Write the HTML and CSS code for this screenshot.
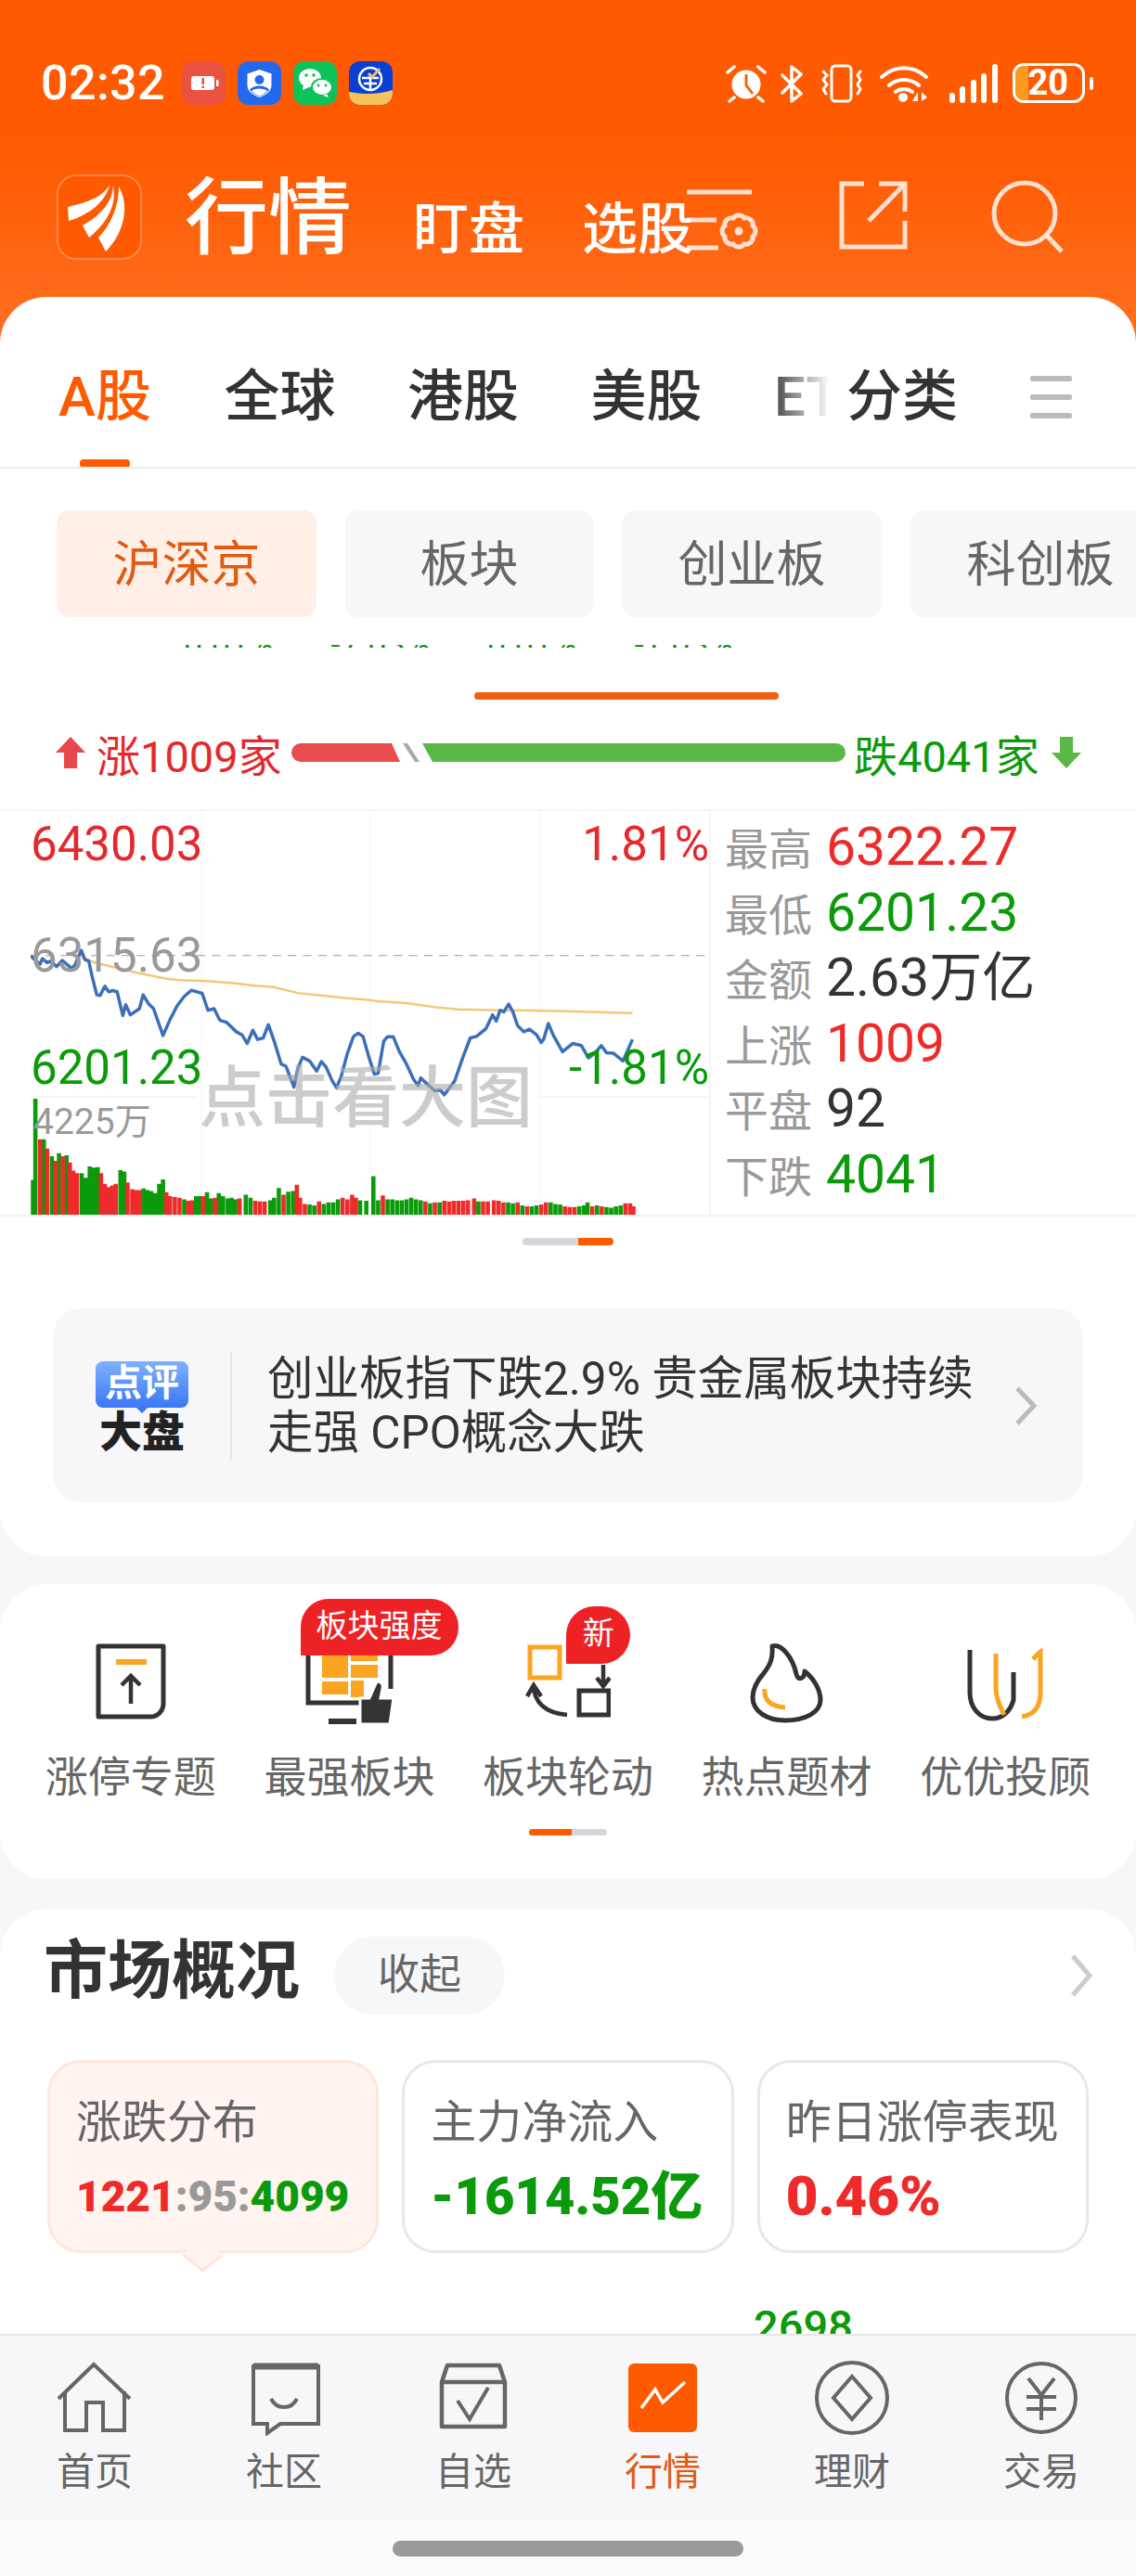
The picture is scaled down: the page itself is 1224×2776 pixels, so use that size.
FILE: index.html
```html
<!DOCTYPE html>
<html lang="zh-CN">
<head>
  <meta charset="utf-8">
  <title>行情</title>
  <link rel="stylesheet" href="styles.css">
</head>
<body>
<div class="app">
  <div class="scroll">
    <header class="header">
      <div class="status">
        <span class="time">02:32</span>
        <svg class="appicon" viewBox="0 0 47 47"><rect width="47" height="47" rx="12" fill="#ea5240"/><rect x="10" y="16" width="25" height="15" rx="3" fill="#fff"/><rect x="37" y="20" width="2.5" height="7" rx="1" fill="#fff"/><rect x="21.5" y="18" width="2.5" height="7" fill="#ea5240"/><rect x="21.5" y="26.500" width="2.500" height="2.500" fill="#ea5240"/></svg>
        <svg class="appicon" viewBox="0 0 47 47"><rect width="47" height="47" rx="12" fill="#2269ee"/><path d="M23.500 9l13 4.500v12c0 7-6 11-13 13.500-7-2.500-13-6.500-13-13.500v-12z" fill="#fff"/><circle cx="23.500" cy="20" r="5" fill="#2269ee"/><path d="M13 31c3-6 18-6 21 0l-4 4-6.500 3-6.500-3z" fill="#2269ee"/><path d="M15 32c3-3.500 14-3.500 17 0-2 2.500-5 4-8.500 5.500-3.500-1.500-6.500-3-8.500-5.500z" fill="#fff"/></svg>
        <svg class="appicon" viewBox="0 0 47 47"><rect width="47" height="47" rx="12" fill="#0ec25a"/><ellipse cx="18" cy="18" rx="12" ry="10" fill="#fff"/><path d="M11 25l-1 6 7-3z" fill="#fff"/><ellipse cx="31" cy="28" rx="11" ry="9" fill="#fff" stroke="#0ec25a" stroke-width="2"/><path d="M36 35l2 4-6-2z" fill="#fff"/><circle cx="14" cy="15" r="1.800" fill="#0ec25a"/><circle cx="22" cy="15" r="1.800" fill="#0ec25a"/><circle cx="27" cy="26" r="1.500" fill="#0ec25a"/><circle cx="35" cy="26" r="1.500" fill="#0ec25a"/></svg>
        <svg class="appicon" viewBox="0 0 47 47"><rect width="47" height="47" rx="12" fill="#0a3fd6"/><path d="M0 33c15 3 32 3 47-2v4a12 12 0 0 1-12 12H12A12 12 0 0 1 0 35z" fill="#f5c35c"/><circle cx="23" cy="19" r="12" fill="none" stroke="#fff" stroke-width="2.500"/><path d="M14 18h18M16 24h14M23 14v16" stroke="#fff" stroke-width="2.500" fill="none"/><path d="M21 13l4 4 8-9" stroke="#e7c06a" stroke-width="3" fill="none"/></svg>
        <div class="status-right">
          <svg class="si-alarm" viewBox="0 0 44 42"><circle cx="22" cy="22" r="15.500" fill="#fff"/><path d="M22 11v12l7 9" stroke="#ff5a00" stroke-width="2.800" fill="none"/><path d="M2 9l7-6M42 9l-7-6M9 36l-5 4M35 36l5 4" stroke="#fff" stroke-width="3.500" stroke-linecap="round"/></svg>
          <svg class="si-bt" viewBox="0 0 26 42"><path d="M2 12l20 20-10 8V3l10 8L2 31" fill="none" stroke="#fff" stroke-width="3.500" stroke-linecap="round" stroke-linejoin="round"/></svg>
          <svg class="si-vib" viewBox="0 0 48 42"><rect x="13" y="2" width="21" height="38" rx="4" fill="none" stroke="#fff" stroke-width="3"/><path d="M4 8l4 4-4 5 4 5-4 5 3 5M44 8l-3 4 3 5-3 5 3 5-3 5" fill="none" stroke="#fff" stroke-width="3" stroke-linecap="round"/></svg>
          <svg class="si-wifi" viewBox="0 0 54 42"><path d="M3 14c14-13 34-13 48 0M11 23c9-8 23-8 32 0M18 30c5-4 13-4 18 0" fill="none" stroke="#fff" stroke-width="4" stroke-linecap="round"/><circle cx="26" cy="36" r="5" fill="#fff"/><path d="M42 30v10h-6zM46 30v10l6-4z" fill="#fff"/></svg>
          <svg class="si-signal" viewBox="0 0 52 42"><path d="M3 34v5M14 27v12M26 20v19M37 13v26M49 3v36" stroke="#fff" stroke-width="6" stroke-linecap="round"/></svg>
          <div class="battery"><i class="battery-fill"></i><b>20</b></div>
          <i class="battery-tip"></i>
        </div>
      </div>
      <div class="titlebar">
        <svg class="logo" viewBox="0 0 92 92"><rect x="1" y="1" width="90" height="90" rx="20" fill="#ff5a00" stroke="#ff9560" stroke-width="1.500"/><path d="M57 11C50 24 34 30 12 35l1 15C34 44 53 30 57 11z" fill="#fff"/><path d="M61 12c4 20-6 40-26 56l-7-13c18-10 32-24 33-43z" fill="#fff"/><path d="M67 13c12 20 6 50-14 70l-8-15c12-12 22-32 22-55z" fill="#fff"/></svg>
        <h1 class="title">行情</h1>
        <span class="subtitle first">盯盘</span>
        <span class="subtitle">选股</span>
        <svg class="tool-filter" viewBox="0 0 92 84"><path d="M2 3h70M2 33h32M2 63h34" stroke="#fff" stroke-opacity=".8" stroke-width="5" fill="none"/><path d="M52 31c3-4 9-4 12 0 5-1 10 3 9 8 4 3 4 9 0 12 1 5-4 9-9 8-3 4-9 4-12 0-5 1-10-3-9-8-4-3-4-9 0-12-1-5 4-9 9-8z" fill="none" stroke="#fff" stroke-opacity=".8" stroke-width="5"/><circle cx="58" cy="45" r="4.500" fill="#fff" fill-opacity=".8"/></svg>
        <svg class="tool-share" viewBox="0 0 74 74"><path d="M27 3H3v68h68V43M43 3h28v30M71 3L32 43" fill="none" stroke="#fff" stroke-opacity=".8" stroke-width="5"/></svg>
        <svg class="tool-search" viewBox="0 0 78 80"><circle cx="36" cy="36" r="33" fill="none" stroke="#fff" stroke-opacity=".8" stroke-width="5"/><path d="M60 60l16 17" stroke="#fff" stroke-opacity=".8" stroke-width="5"/></svg>
      </div>
    </header>

    <section class="sheet">
      <div class="tabs">
        <div class="tabs-list">
          <span class="tab active">A股</span>
          <span class="tab">全球</span>
          <span class="tab">港股</span>
          <span class="tab">美股</span>
          <span class="tab">ETF</span>
        </div>
        <span class="tab tab-type">分类</span>
        <div class="tabs-menu"><i></i><i></i><i></i></div>
      </div>

      <div class="pills">
        <span class="pill active">沪深京</span>
        <span class="pill narrow">板块</span>
        <span class="pill">创业板</span>
        <span class="pill">科创板</span>
      </div>

      <div class="clipped">
        <span>0.01%</span><span>-7.03%</span><span>0.01%</span><span>-1.03%</span>
      </div>
      <div class="swipe-bar"></div>

      <div class="breadth">
        <svg class="arrow" viewBox="0 0 32 34"><path d="M16 0l16 17H23v17H9V17H0z" fill="#e8484b"/></svg>
        <span class="up">涨1009家</span>
        <svg class="breadth-bar" viewBox="0 0 597 20"><path d="M10 0h98l9 20H10a10 10 0 0 1 0-20z" fill="#e84c4e"/><path d="M120 0h5l13 20h-5z" fill="#a8a8a8"/><path d="M141 0h446a10 10 0 0 1 0 20H152z" fill="#5ab946"/></svg>
        <span class="down">跌4041家</span>
        <svg class="arrow" viewBox="0 0 32 34"><path d="M9 0h14v17h9L16 34 0 17h9z" fill="#5ab946"/></svg>
      </div>

      <div class="market">
        <div class="chart">
          <svg class="chart-svg" viewBox="65 92 1435 1313" preserveAspectRatio="none">
            <path d="M427 92V1405M784 92V1405M1142 92V1405" stroke="#f5f5f5" stroke-width="2" fill="none"/>
            <path d="M65 1022H417M1140 1022H1500" stroke="#eee" stroke-width="3" fill="none"/>
            <path d="M65 562H1496" stroke="#999" stroke-width="3" stroke-dasharray="18 14" fill="none"/>
            <path stroke="#0a9a0a" stroke-width="9" fill="none" d="M70 1405V1292M75 1405V1028M93 1405V1160M110 1405V1215M125 1405V1205M141 1405V1212M173 1405V1270M181 1405V1285M190 1405V1248M198 1405V1252M207 1405V1250M255 1405V1260M263 1405V1265M304 1405V1320M312 1405V1325M320 1405V1328M328 1405V1335M337 1405V1305M345 1405V1290M390 1405V1355M415 1405V1345M423 1405V1345M438 1405V1332M447 1405V1352M463 1405V1335M472 1405V1345M482 1405V1352M490 1405V1350M498 1405V1355M520 1405V1340M530 1405V1350M572 1405V1358M580 1405V1350M590 1405V1318M610 1405V1330M620 1405V1328M655 1405V1372M665 1405V1375M685 1405V1370M695 1405V1365M705 1405V1365M715 1405V1355M762 1405V1358M775 1405V1360M790 1405V1280M800 1405V1358M820 1405V1355M830 1405V1355M840 1405V1358M850 1405V1358M860 1405V1355M870 1405V1350M880 1405V1355M890 1405V1358M910 1405V1368M930 1405V1365M1012 1405V1362M1075 1405V1365M1085 1405V1368M1105 1405V1375M1125 1405V1378M1135 1405V1375M1165 1405V1365M1175 1405V1370M1185 1405V1372M1225 1405V1378M1235 1405V1375M1243 1405V1365M1263 1405V1375M1283 1405V1380M1293 1405V1382M1303 1405V1378M1313 1405V1375"/>
            <path stroke="#ee2a2a" stroke-width="9" fill="none" d="M85 1405V1160M100 1405V1190M118 1405V1230M133 1405V1215M148 1405V1235M155 1405V1262M163 1405V1270M214 1405V1270M222 1405V1305M230 1405V1315M238 1405V1310M245 1405V1305M270 1405V1300M280 1405V1322M288 1405V1325M296 1405V1325M352 1405V1332M360 1405V1345M370 1405V1348M380 1405V1350M398 1405V1360M406 1405V1358M430 1405V1345M455 1405V1350M507 1405V1352M540 1405V1360M550 1405V1362M560 1405V1362M600 1405V1340M628 1405V1308M635 1405V1350M645 1405V1370M675 1405V1362M725 1405V1350M735 1405V1355M745 1405V1340M753 1405V1350M810 1405V1342M900 1405V1362M920 1405V1365M940 1405V1360M950 1405V1362M960 1405V1360M970 1405V1360M980 1405V1360M990 1405V1358M1003 1405V1352M1022 1405V1362M1032 1405V1362M1045 1405V1358M1055 1405V1360M1065 1405V1365M1095 1405V1365M1115 1405V1378M1145 1405V1372M1155 1405V1365M1195 1405V1378M1205 1405V1380M1215 1405V1380M1253 1405V1378M1273 1405V1378M1323 1405V1368M1333 1405V1368M1340 1405V1378"/>
            <polyline class="avg-line" points="172,568 200,585 240,600 290,618 350,637 380,642 440,645 500,653 540,660 580,665 630,684 680,692 730,700 780,706 800,711 860,717 920,730 970,737 1050,740 1100,740 1200,743 1338,749"/>
            <polyline class="price-line" points="65,562 75,578 85,590 90,572 100,585 108,580 120,598 132,578 145,595 152,605 160,590 165,570 172,545 180,575 188,580 195,630 205,690 212,692 222,662 230,680 238,676 248,680 260,757 266,722 276,755 295,735 303,690 315,720 325,735 345,822 360,770 375,725 390,695 405,675 428,685 440,740 453,735 465,772 480,780 500,810 512,820 523,848 535,805 545,835 557,830 568,787 580,840 595,915 605,922 622,990 630,930 640,893 655,905 670,938 680,907 690,925 703,970 712,992 722,955 735,880 748,825 758,815 768,825 780,890 792,948 800,945 812,840 820,826 832,826 845,875 860,915 875,965 885,985 890,960 905,982 920,1002 932,1000 940,1015 962,970 980,890 995,830 1008,825 1028,800 1042,755 1050,775 1058,740 1066,745 1076,720 1085,745 1095,790 1108,810 1120,802 1135,820 1145,845 1150,835 1160,783 1170,820 1190,875 1212,848 1230,855 1245,895 1258,880 1272,855 1283,878 1298,880 1318,905 1328,870 1338,835"/>
          </svg>
          <span class="axis hi-price">6430.03</span>
          <span class="axis hi-pct">1.81%</span>
          <span class="axis base-price">6315.63</span>
          <span class="axis lo-price">6201.23</span>
          <span class="axis lo-pct">-1.81%</span>
          <span class="axis vol">4225万</span>
          <span class="watermark">点击看大图</span>
        </div>
        <div class="stats">
          <div class="stat"><label>最高</label><span class="red">6322.27</span></div>
          <div class="stat"><label>最低</label><span class="green">6201.23</span></div>
          <div class="stat"><label>金额</label><span>2.63万亿</span></div>
          <div class="stat"><label>上涨</label><span class="red">1009</span></div>
          <div class="stat"><label>平盘</label><span>92</span></div>
          <div class="stat"><label>下跌</label><span class="green">4041</span></div>
        </div>
      </div>
      <div class="pager chart-pager"><i></i><i class="on"></i></div>

      <div class="comment">
        <div class="comment-logo">
          <span class="bubble">点评</span>
          <span class="big">大盘</span>
        </div>
        <p class="comment-text">创业板指下跌2.9% 贵金属板块持续<br>走强 CPO概念大跌</p>
        <svg class="chevron" viewBox="0 0 24 42"><path d="M3 2l18 19L3 40" fill="none" stroke="#bbb" stroke-width="5"/></svg>
      </div>
    </section>

    <section class="card entries">
      <div class="entry-grid">
        <div class="entry">
          <svg class="entry-icon" viewBox="0 0 92 88"><path d="M11 4h70v62a14 14 0 0 1-14 14H11z" fill="none" stroke="#333" stroke-width="5" stroke-linejoin="round"/><path d="M30 21h33" stroke="#fba422" stroke-width="6"/><path d="M46 66V38M36 46l10-10 10 10" fill="none" stroke="#333" stroke-width="4.500"/></svg>
          <span>涨停专题</span>
        </div>
        <div class="entry">
          <svg class="entry-icon" viewBox="0 0 104 88"><path d="M8 0v65h60M97 0v50" fill="none" stroke="#333" stroke-width="5"/><rect x="23" y="0" width="28" height="38" fill="#fba422"/><rect x="54" y="0" width="29" height="20" fill="#fba422"/><rect x="23" y="42" width="28" height="14" fill="#fba422"/><rect x="54" y="24" width="29" height="14" fill="#fba422"/><rect x="54" y="41" width="14" height="18" fill="#fba422"/><path d="M30 85h30" stroke="#333" stroke-width="6"/><path d="M64 88V60h10l8-18c5 0 7 3 6 8l-2 10h14l-4 28z" fill="#333" stroke="#fff" stroke-width="3"/></svg>
          <span>最强板块</span>
          <b class="badge">板块强度</b>
        </div>
        <div class="entry">
          <svg class="entry-icon" viewBox="0 0 92 88"><path d="M5 5h32v33H5z" fill="none" stroke="#fba422" stroke-width="5"/><path d="M84 24v22M77 38l7 9 7-9" fill="none" stroke="#333" stroke-width="4.500"/><path d="M58 52h32v26H58z" fill="none" stroke="#333" stroke-width="5"/><path d="M9 46c0 18 12 30 36 32M2 58l7-12 8 12" fill="none" stroke="#333" stroke-width="4.500"/></svg>
          <span>板块轮动</span>
          <b class="badge badge-new">新</b>
        </div>
        <div class="entry">
          <svg class="entry-icon" viewBox="0 0 92 88"><path d="M30 4c10-3 22 12 26 30 1 4 3 6 6 4 2-1 3-4 3-7 10 8 17 20 17 31 0 13-16 22-38 22-20 0-35-10-35-25 0-10 5-18 12-26 7-9 10-16 9-29z" fill="none" stroke="#333" stroke-width="5" stroke-linejoin="round"/><path d="M22 50c-1 12 6 19 22 20" fill="none" stroke="#fba422" stroke-width="5"/></svg>
          <span>热点题材</span>
        </div>
        <div class="entry">
          <svg class="entry-icon" viewBox="0 0 92 88"><path d="M8 8v46c0 17 11 28 24 28 12 0 20-9 23-20V32" fill="none" stroke="#333" stroke-width="5"/><path d="M36 12v36c0 12 4 20 9 30M64 80c12-2 20-10 20-26V10c-3 2-6 6-8 8" fill="none" stroke="#fba422" stroke-width="5"/></svg>
          <span>优优投顾</span>
        </div>
      </div>
      <div class="pager entry-pager"><i class="on"></i><i></i></div>
    </section>

    <section class="card overview">
      <div class="overview-head">
        <h2>市场概况</h2>
        <span class="fold">收起</span>
        <svg class="chevron head-chevron" viewBox="0 0 24 46"><path d="M3 2l18 21L3 44" fill="none" stroke="#ccc" stroke-width="5"/></svg>
      </div>
      <div class="tiles">
        <div class="tile active">
          <span class="tile-label">涨跌分布</span>
          <div class="tile-value small"><span class="red">1221</span><span class="gray">:95:</span><span class="green">4099</span></div>
        </div>
        <div class="tile">
          <span class="tile-label">主力净流入</span>
          <div class="tile-value green">-1614.52亿</div>
        </div>
        <div class="tile">
          <span class="tile-label">昨日涨停表现</span>
          <div class="tile-value large red">0.46%</div>
        </div>
      </div>
      <div class="peek green">2698</div>
    </section>
  </div>

  <nav class="tabbar">
    <div class="nav">
      <svg viewBox="0 0 84 78"><path d="M3 40L41 3l39 37M10 32v42h23V44h18v30h23V32" fill="none" stroke="#666" stroke-width="4"/></svg>
      <span>首页</span>
    </div>
    <div class="nav">
      <svg viewBox="0 0 84 78"><path d="M9 5h70v62H38l-14 10v-10H9z" fill="none" stroke="#666" stroke-width="4"/><path d="M9 5h70" stroke="#666" stroke-width="7"/><path d="M28 40c6 12 22 12 28 0" fill="none" stroke="#666" stroke-width="4"/></svg>
      <span>社区</span>
    </div>
    <div class="nav">
      <svg viewBox="0 0 84 78"><path d="M8 22v48h68V22L70 4H14z" fill="none" stroke="#666" stroke-width="4.500" stroke-linejoin="round"/><path d="M8 22h68" stroke="#666" stroke-width="4.500"/><path d="M25 42l13 20 20-34" fill="none" stroke="#666" stroke-width="4"/></svg>
      <span>自选</span>
    </div>
    <div class="nav active">
      <svg viewBox="0 0 84 78"><rect x="5" y="2" width="74" height="74" rx="6" fill="#ff5a00"/><path d="M19 50l15-20 8 14 24-22" fill="none" stroke="#fff" stroke-width="3.500"/></svg>
      <span>行情</span>
    </div>
    <div class="nav">
      <svg viewBox="0 0 84 82"><ellipse cx="42" cy="41" rx="38" ry="38" fill="none" stroke="#666" stroke-width="4"/><path d="M42 18l20 23-20 23-20-23z" fill="none" stroke="#666" stroke-width="4"/></svg>
      <span>理财</span>
    </div>
    <div class="nav">
      <svg viewBox="0 0 84 82"><circle cx="42" cy="41" r="37" fill="none" stroke="#666" stroke-width="4"/><path d="M28 20l14 18 14-18M26 40h32M26 53h32M42 38v27" fill="none" stroke="#666" stroke-width="4"/></svg>
      <span>交易</span>
    </div>
  </nav>
  <div class="homebar"><i></i></div>
</div>
</body>
</html>
```

FILE: styles.css
```css
* {
  box-sizing: border-box;
}
body {
  margin: 0;
  background: #f6f7f9;
  font-family: Roboto, "Noto Sans CJK SC", sans-serif;
  color: #333;
}
svg {
  display: block;
  flex: none;
}
h1, h2, p {
  margin: 0;
  font-weight: normal;
}
.red { color: #ee2a2a; }
.green { color: #0a9a0a; }
.gray { color: #999; }

.app {
  width: 1224px;
  height: 2776px;
  display: flex;
  flex-direction: column;
  overflow: hidden;
}
.scroll {
  flex: 1;
  overflow: hidden;
  min-height: 0;
}

/* header */
.header {
  height: 370px;
  margin-bottom: -50px;
  padding: 66px 46px 0 44px;
  background: linear-gradient(#ff5a00 0, #ff5a00 150px, #ff6c1c 340px);
  color: #fff;
}
.status {
  display: flex;
  align-items: center;
  height: 47px;
  gap: 13px;
}
.time {
  width: 139px;
  font-size: 52px;
  font-weight: 500;
  line-height: 47px;
  letter-spacing: 0.4px;
}
.appicon {
  width: 47px;
  height: 47px;
}
.status-right {
  margin-left: auto;
  display: flex;
  align-items: center;
}
.si-alarm { width: 44px; height: 42px; }
.si-bt { width: 26px; height: 42px; margin-left: 15px; }
.si-vib { width: 48px; height: 42px; margin-left: 16px; }
.si-wifi { width: 54px; height: 42px; margin-left: 16px; }
.si-signal { width: 52px; height: 42px; margin-left: 22px; }
.battery {
  position: relative;
  width: 78px;
  height: 43px;
  margin-left: 16px;
  border: 3px solid #fff;
  border-radius: 12px;
  font-size: 38px;
  line-height: 37px;
  text-align: right;
  padding-right: 15px;
  overflow: hidden;
}
.battery b {
  position: relative;
}
.battery-fill {
  position: absolute;
  left: 0;
  top: 0;
  bottom: 0;
  width: 14px;
  background: #fc9a1e;
}
.battery-tip {
  width: 4px;
  height: 14px;
  margin-left: 5px;
  border-radius: 2px;
  background: #fff;
}
.titlebar {
  display: flex;
  align-items: flex-end;
  height: 92px;
  margin: 75px 0 0 17px;
  position: relative;
}
.logo {
  width: 92px;
  height: 92px;
}
.title {
  margin: 0 0 -6px 46px;
  font-size: 90px;
  line-height: 100px;
  font-weight: 500;
}
.subtitle {
  font-size: 60px;
  line-height: 64px;
  margin-left: 62px;
  font-weight: 500;
}
.subtitle.first {
  margin-left: 66px;
}
.tool-filter {
  position: absolute;
  left: 677px;
  top: 16px;
  width: 92px;
  height: 84px;
}
.tool-share {
  position: absolute;
  left: 843px;
  top: 7px;
  width: 74px;
  height: 74px;
}
.tool-search {
  position: absolute;
  left: 1007px;
  top: 6px;
  width: 78px;
  height: 80px;
}

/* top sheet */
.sheet {
  position: relative;
  height: 1357px;
  background: #fff;
  border-radius: 50px;
}
.tabs {
  display: flex;
  align-items: center;
  height: 185px;
  padding: 0 0 0 62px;
  border-bottom: 2px solid #ebebeb;
  overflow: hidden;
}
.tabs-list {
  display: flex;
  gap: 77.500px;
  width: 832px;
  flex: none;
  overflow: hidden;
  height: 185px;
  padding-top: 32px;
  align-items: center;
  -webkit-mask-image: linear-gradient(to right, #000 92%, transparent 100%);
  mask-image: linear-gradient(to right, #000 92%, transparent 100%);
}
.tab {
  position: relative;
  display: block;
  font-size: 60px;
  line-height: 80px;
  font-weight: 500;
  white-space: nowrap;
  flex: none;
}
.tab.active {
  color: #ff5a00;
  width: 102px;
  text-align: center;
}
.tab.active::after {
  content: "";
  position: absolute;
  left: 24px;
  bottom: -36px;
  width: 54px;
  height: 9px;
  border-radius: 4px;
  background: #ff5a00;
}
.tab-type {
  margin: 32px 0 0 18px;
}
.tabs-menu {
  display: flex;
  flex-direction: column;
  gap: 14px;
  margin: 32px 0 0 78px;
}
.tabs-menu i {
  display: block;
  width: 45px;
  height: 6px;
  border-radius: 2px;
  background: #bbb;
}

.pills {
  display: flex;
  gap: 31px;
  padding-left: 61px;
  margin-top: 45px;
  overflow: hidden;
}
.pill {
  flex: none;
  width: 280px;
  height: 115px;
  border-radius: 14px;
  background: #f6f7f9;
  color: #666;
  font-size: 53px;
  line-height: 119px;
  text-align: center;
}
.pill.narrow {
  width: 267px;
}
.pill.active {
  background: #ffefe7;
  color: #e05a10;
}
.clipped {
  display: flex;
  height: 3px;
  margin-top: 30px;
  padding-left: 198px;
  gap: 62px;
  overflow: hidden;
  color: #0a9a0a;
  font-size: 36px;
  line-height: 3px;
}
.clipped span {
  display: block;
  height: 3px;
  overflow: hidden;
  line-height: 0;
}
.swipe-bar {
  width: 328px;
  height: 8px;
  margin: 48px 0 0 511px;
  border-radius: 4px;
  background: #f2600f;
}

.breadth {
  display: flex;
  align-items: center;
  height: 60px;
  margin-top: 27px;
  padding-left: 59px;
  font-size: 47px;
}
.arrow {
  width: 34px;
  height: 34px;
}
.up {
  width: 210px;
  margin-left: 11px;
  color: #e5282c;
  white-space: nowrap;
}
.down {
  width: 212px;
  margin-left: 9px;
  color: #0a9a0a;
  white-space: nowrap;
}
.breadth-bar {
  width: 597px;
  height: 20px;
}
.market {
  display: flex;
  height: 439px;
  margin-top: 31px;
  border-top: 2px solid #f6f6f6;
  border-bottom: 2px solid #f2f2f2;
}
.chart {
  position: relative;
  width: 733px;
  margin-left: 33px;
  height: 435px;
  border-right: 2px solid #f4f4f4;
}
.chart-svg {
  width: 731px;
  height: 435px;
}
.avg-line {
  fill: none;
  stroke: #f3c776;
  stroke-width: 2.5;
  vector-effect: non-scaling-stroke;
}
.price-line {
  fill: none;
  stroke: #3b70b8;
  stroke-width: 3.5;
  stroke-linejoin: round;
  vector-effect: non-scaling-stroke;
}
.axis {
  position: absolute;
  font-size: 51px;
  line-height: 50px;
  white-space: nowrap;
}
.hi-price { left: 0; top: 11px; color: #e5282c; }
.hi-pct { right: 0; top: 11px; color: #e5282c; }
.base-price { left: 0; top: 131px; color: #999; }
.lo-price { left: 0; top: 252px; color: #0a9a0a; }
.lo-pct { right: 0; top: 252px; color: #0a9a0a; }
.vol { left: 3px; top: 316px; font-size: 39px; line-height: 38px; color: #999; }
.watermark {
  position: absolute;
  left: 181px;
  top: 272px;
  font-size: 72px;
  line-height: 76px;
  font-weight: 500;
  color: rgba(170, 170, 170, 0.6);
  white-space: nowrap;
}
.stats {
  padding: 4px 0 0 15px;
  flex: 1;
}
.stat {
  display: flex;
  align-items: baseline;
  height: 70.5px;
  line-height: 70.5px;
  font-size: 57px;
  white-space: nowrap;
}
.stat label {
  width: 109px;
  font-size: 47px;
  color: #999;
}

.pager {
  display: flex;
  height: 8px;
  border-radius: 4px;
  overflow: hidden;
  background: #d3d6da;
}
.pager i {
  display: block;
  flex: 1;
}
.pager i.on {
  background: #ff5a00;
}
.chart-pager {
  width: 98px;
  margin: 23px 0 0 563px;
}
.chart-pager i:first-child {
  flex: 60;
}
.chart-pager i.on {
  flex: 38;
}

.comment {
  display: flex;
  align-items: center;
  width: 1110px;
  height: 209px;
  margin: 68px 0 0 57px;
  padding: 0 50px 0 45px;
  border-radius: 30px;
  background: #f7f7f9;
}
.comment-logo {
  width: 102px;
  display: flex;
  flex-direction: column;
  align-items: center;
}
.bubble {
  position: relative;
  width: 100px;
  height: 50px;
  border-radius: 8px;
  background: linear-gradient(#7fb0ff, #3a78f5);
  color: #fff;
  font-size: 40px;
  line-height: 48px;
  font-weight: 700;
  text-align: center;
  white-space: nowrap;
}
.bubble::after {
  content: "";
  position: absolute;
  left: 44px;
  bottom: -6px;
  border: 6px solid transparent;
  border-top-color: #3a78f5;
  border-bottom: 0;
}
.big {
  font-size: 46px;
  line-height: 40px;
  font-weight: 900;
  margin-top: 6px;
  color: #222;
}
.comment-text {
  flex: 1;
  margin-left: 44px;
  padding-left: 38px;
  border-left: 2px solid #e6e6e6;
  font-size: 49.500px;
  line-height: 58px;
  color: #333;
  white-space: nowrap;
}
.chevron {
  width: 24px;
  height: 42px;
}

/* cards */
.card {
  background: #fff;
  border-radius: 50px;
  margin-top: 30px;
  overflow: hidden;
}
.entries {
  position: relative;
  height: 318px;
  padding-top: 63px;
}
.entry-grid {
  display: grid;
  grid-template-columns: repeat(5, 1fr);
  padding: 0 23px;
}
.entry {
  position: relative;
  display: flex;
  flex-direction: column;
  align-items: center;
  color: #666;
  font-size: 46px;
  line-height: 56px;
}
.entry span {
  margin-top: 29px;
  white-space: nowrap;
}
.entry-icon {
  height: 88px;
}
.badge {
  position: absolute;
  left: 65px;
  top: -47px;
  width: 170px;
  height: 61px;
  border-radius: 30px 30px 30px 0;
  background: #ee2224;
  color: #fff;
  font-size: 34px;
  font-weight: normal;
  line-height: 59px;
  text-align: center;
}
.badge-new {
  left: 116px;
  top: -39px;
  width: 69px;
  height: 62px;
  border-radius: 32px 32px 32px 0;
}
.entry-pager {
  width: 84px;
  height: 7px;
  margin: 28px auto 0;
}
.entry-pager i.on {
  flex: 46;
}
.entry-pager i:last-child {
  flex: 38;
}

.overview {
  position: relative;
  height: 540px;
  margin-top: 32px;
}
.overview-head {
  display: flex;
  align-items: center;
  height: 84px;
  margin-top: 30px;
  padding: 0 47px 0 47px;
}
.overview-head h2 {
  width: 275px;
  font-size: 69px;
  font-weight: 700;
  line-height: 80px;
  padding-bottom: 9px;
  white-space: nowrap;
}
.fold {
  width: 184px;
  height: 84px;
  margin-left: 38px;
  border-radius: 42px;
  background: #f6f7f9;
  color: #666;
  font-size: 45px;
  line-height: 84px;
  text-align: center;
}
.head-chevron {
  margin-left: auto;
  height: 46px;
}
.tiles {
  display: flex;
  gap: 25px;
  padding: 49px 51px 0;
}
.tile {
  position: relative;
  flex: 1;
  height: 208px;
  padding: 35px 0 0 28px;
  border: 3px solid #e8e8e8;
  border-radius: 36px;
}
.tile.active {
  background: #fff4f0;
  border-color: #ffe6dc;
}
.tile.active::after {
  content: "";
  position: absolute;
  left: 150px;
  bottom: -20px;
  width: 26px;
  height: 26px;
  background: #fff4f0;
  border-right: 3px solid #ffe6dc;
  border-bottom: 3px solid #ffe6dc;
  transform: rotate(45deg) skew(-6deg, -6deg);
}
.tile-label {
  display: block;
  font-size: 49px;
  line-height: 60px;
  color: #666;
  white-space: nowrap;
}
.tile-value {
  margin-top: 18px;
  font-size: 56px;
  font-weight: 900;
  line-height: 62px;
  white-space: nowrap;
}
.tile-value.small {
  font-size: 46px;
}
.tile-value.large {
  font-size: 60px;
}
.peek {
  position: absolute;
  left: 812px;
  top: 426px;
  font-size: 47px;
  line-height: 47px;
  font-weight: 500;
}

/* bottom nav */
.tabbar {
  flex: none;
  height: 200px;
  display: grid;
  grid-template-columns: repeat(6, 204px);
  border-top: 2px solid #e6e6e6;
  background: #f7f7f9;
  padding-top: 26px;
}
.nav {
  display: flex;
  flex-direction: column;
  align-items: center;
  color: #666;
  font-size: 41px;
  line-height: 50px;
}
.nav svg {
  width: 84px;
  height: 82px;
  margin-bottom: 14px;
}
.nav.active {
  color: #e05a15;
}
.homebar {
  flex: none;
  height: 61px;
  padding-top: 23px;
  background: #fbfbfc;
}
.homebar i {
  display: block;
  width: 378px;
  height: 17px;
  margin: 0 auto;
  border-radius: 9px;
  background: #999;
}
```
